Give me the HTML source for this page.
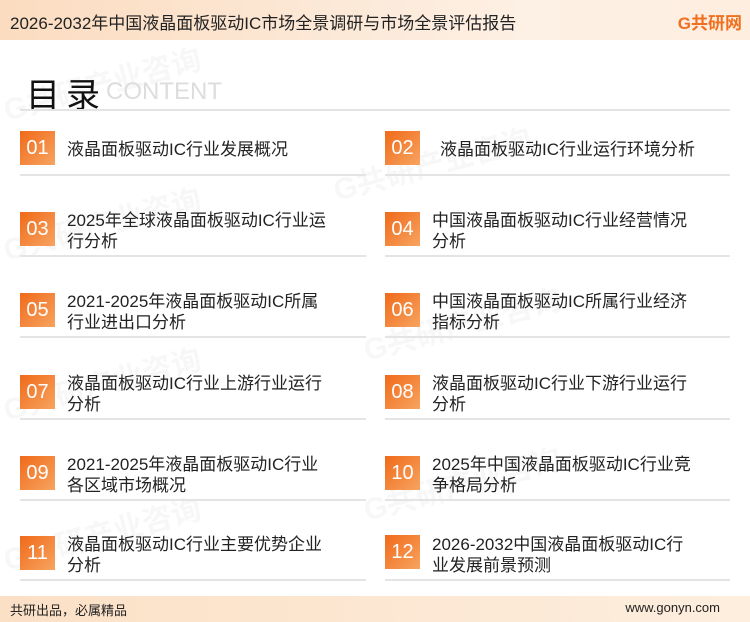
<!DOCTYPE html>
<html><head><meta charset="utf-8"><style>
*{margin:0;padding:0;box-sizing:border-box}
body{width:750px;height:622px;position:relative;background:#fff;font-family:"Liberation Sans","Noto Sans CJK SC",sans-serif;overflow:hidden;color:#222}
.hdr{position:absolute;left:0;top:0;width:750px;height:40px;background:linear-gradient(90deg,#fbdcc0,#fdf0e4 70%,#fdeee0)}
.hdr .t{position:absolute;left:10px;top:9px;font-size:17px;color:#222}
.logo{position:absolute;right:8px;top:9px;font-size:17px;font-weight:bold;color:#f07020}
.ttl{position:absolute;left:26px;top:68px;font-size:34px;color:#111;letter-spacing:6px}
.cnt{position:absolute;left:106px;top:78px;font-size:24px;color:#ddd}
.line{position:absolute;height:2px;background:#e4e4e4}
.num{position:absolute;width:35px;height:34px;background:linear-gradient(135deg,#f06a1a,#f7a460);color:#fff;font-size:20px;text-align:center;line-height:34px}
.txt{position:absolute;font-size:17px;line-height:21px;color:#222;white-space:nowrap}
.ftr{position:absolute;left:0;top:596px;width:750px;height:26px;background:linear-gradient(90deg,#fbe0c6,#fdeede)}
.ftr .l{position:absolute;left:10px;top:4px;font-size:13px}
.ftr .r{position:absolute;right:30px;top:4px;font-size:13px}
.wm{position:absolute;color:rgba(0,0,0,0.03);font-weight:bold;font-size:30px;transform:rotate(-15deg);white-space:nowrap}
</style></head><body>
<div class="hdr"><div class="t">2026-2032年中国液晶面板驱动IC市场全景调研与市场全景评估报告</div><div class="logo">G共研网</div></div>
<div class="wm" style="left:0;top:60px">G共研产业咨询</div>
<div class="wm" style="left:330px;top:140px">G共研产业咨询</div>
<div class="wm" style="left:0;top:200px">G共研产业咨询</div>
<div class="wm" style="left:360px;top:300px">G共研产业咨询</div>
<div class="wm" style="left:0;top:360px">G共研产业咨询</div>
<div class="wm" style="left:360px;top:460px">G共研产业咨询</div>
<div class="wm" style="left:0;top:510px">G共研产业咨询</div>
<div class="ttl">目录</div><div class="cnt">CONTENT</div>
<div class="line" style="left:20px;top:109px;width:710px"></div>

<div class="num" style="left:20px;top:131px">01</div><div class="txt" style="left:67px;top:139px">液晶面板驱动IC行业发展概况</div>
<div class="num" style="left:385px;top:131px">02</div><div class="txt" style="left:440px;top:139px">液晶面板驱动IC行业运行环境分析</div>
<div class="line" style="left:20px;top:174px;width:346px"></div><div class="line" style="left:385px;top:174px;width:345px"></div>

<div class="num" style="left:20px;top:212px">03</div><div class="txt" style="left:67px;top:210px">2025年全球液晶面板驱动IC行业运<br>行分析</div>
<div class="num" style="left:385px;top:212px">04</div><div class="txt" style="left:432px;top:210px">中国液晶面板驱动IC行业经营情况<br>分析</div>
<div class="line" style="left:20px;top:255px;width:346px"></div><div class="line" style="left:385px;top:255px;width:345px"></div>

<div class="num" style="left:20px;top:293px">05</div><div class="txt" style="left:67px;top:291px">2021-2025年液晶面板驱动IC所属<br>行业进出口分析</div>
<div class="num" style="left:385px;top:293px">06</div><div class="txt" style="left:432px;top:291px">中国液晶面板驱动IC所属行业经济<br>指标分析</div>
<div class="line" style="left:20px;top:336px;width:346px"></div><div class="line" style="left:385px;top:336px;width:345px"></div>

<div class="num" style="left:20px;top:375px">07</div><div class="txt" style="left:67px;top:373px">液晶面板驱动IC行业上游行业运行<br>分析</div>
<div class="num" style="left:385px;top:375px">08</div><div class="txt" style="left:432px;top:373px">液晶面板驱动IC行业下游行业运行<br>分析</div>
<div class="line" style="left:20px;top:418px;width:346px"></div><div class="line" style="left:385px;top:418px;width:345px"></div>

<div class="num" style="left:20px;top:456px">09</div><div class="txt" style="left:67px;top:454px">2021-2025年液晶面板驱动IC行业<br>各区域市场概况</div>
<div class="num" style="left:385px;top:456px">10</div><div class="txt" style="left:432px;top:454px">2025年中国液晶面板驱动IC行业竞<br>争格局分析</div>
<div class="line" style="left:20px;top:499px;width:346px"></div><div class="line" style="left:385px;top:499px;width:345px"></div>

<div class="num" style="left:20px;top:536px">11</div><div class="txt" style="left:67px;top:534px">液晶面板驱动IC行业主要优势企业<br>分析</div>
<div class="num" style="left:385px;top:535px">12</div><div class="txt" style="left:432px;top:534px">2026-2032中国液晶面板驱动IC行<br>业发展前景预测</div>
<div class="line" style="left:20px;top:579px;width:346px"></div><div class="line" style="left:385px;top:579px;width:345px"></div>

<div class="ftr"><div class="l">共研出品，必属精品</div><div class="r">www.gonyn.com</div></div>
</body></html>
